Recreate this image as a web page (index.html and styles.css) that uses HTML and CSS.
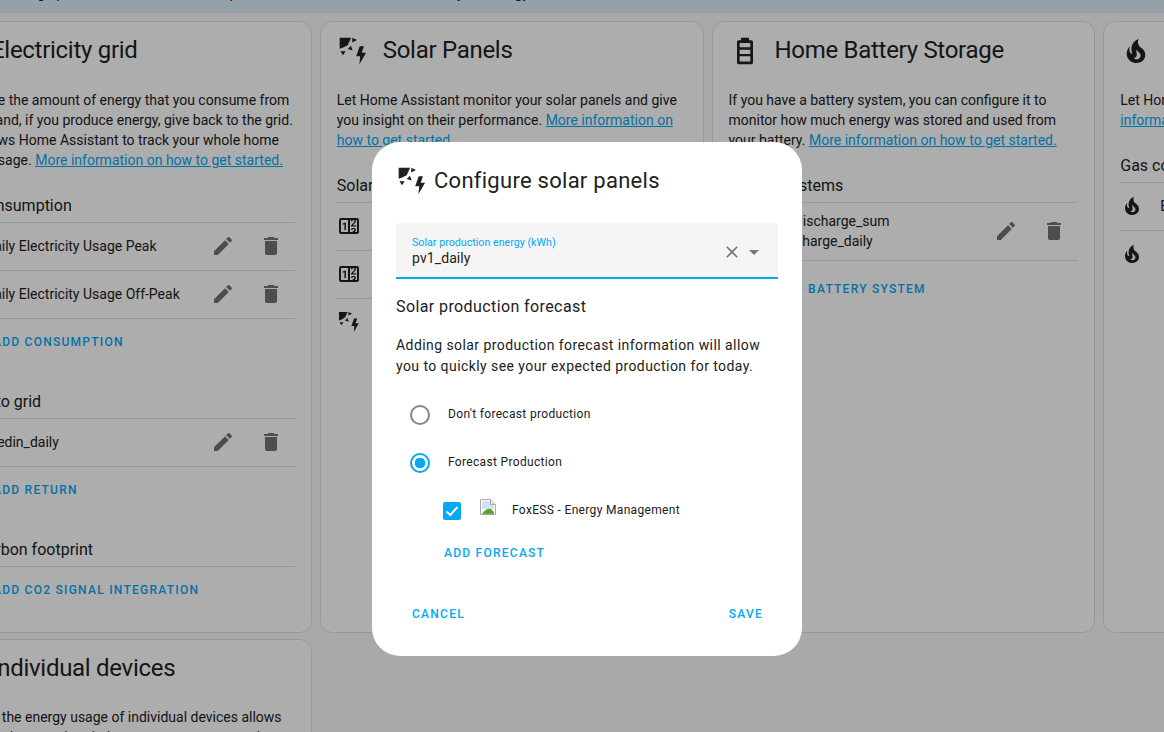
FILE: index.html
```html
<!DOCTYPE html>
<html lang="en">

<head>
    <meta charset="UTF-8">
    <meta name="viewport" content="width=device-width, initial-scale=1.0">
    <title>Energy configuration</title>
    <link rel="stylesheet" href="styles.css">
</head>

<body>
    <svg class="sprite">
        <symbol id="i-solar" viewBox="0 0 24 24">
            <path d="M2 2h8.6L8 7.6 4.6 9.4 2 10.4zM11.45 2v3.55L15 3.77zM10.45 8 8 10.46l3.75 1.25zM2.6 12.2h3.9l-2 3zM17 8.5l-2.6 7.4h3l-.6 6.1 5-8.7h-3.3l1.7-4.8z" />
        </symbol>
        <symbol id="i-counter" viewBox="0 0 24 24">
            <path d="M4,4H20A2,2 0 0,1 22,6V18A2,2 0 0,1 20,20H4A2,2 0 0,1 2,18V6A2,2 0 0,1 4,4M4,6V18H11V6H4M20,18V6H18.76C19,6.54 18.95,7.07 18.95,7.13C18.88,7.8 18.41,8.5 18.24,8.75L15.91,11.3L19.23,11.28L19.24,12.5L14.04,12.47L14,11.47C14,11.47 17.05,8.24 17.2,7.95C17.34,7.67 17.91,6 16.5,6C15.27,6.05 15.41,7.3 15.41,7.3L13.87,7.31C13.87,7.31 13.88,6.65 14.25,6H13V18H15.58L15.57,17.14L16.54,17.13C16.54,17.13 17.45,16.97 17.46,16.08C17.5,15.08 16.65,15.08 16.5,15.08C16.37,15.08 15.43,15.13 15.43,15.97H13.91C13.91,15.97 13.95,13.89 16.5,13.89C19.1,13.89 18.96,15.91 18.96,15.91C18.96,15.91 19,17.16 17.85,17.63L18.37,18H20M8.92,16H7.42V10.2L5.62,10.76V9.53L8.76,8.41H8.92V16Z" />
        </symbol>
        <symbol id="i-battery" viewBox="0 0 24 24">
            <path fill-rule="evenodd" d="M7.33 4H9V2h6v2h1.67C17.4 4 18 4.6 18 5.33v15.34c0 .73-.6 1.33-1.33 1.33H7.33C6.6 22 6 21.4 6 20.67V5.33C6 4.6 6.6 4 7.33 4zM8 6v3.2h8V6zM8 11v3.2h8V11zM8 16v3.8h8V16z" />
        </symbol>
        <symbol id="i-fire" viewBox="0 0 24 24">
            <path d="M17.66 11.2C17.43 10.9 17.15 10.64 16.89 10.38C16.22 9.78 15.46 9.35 14.82 8.72C13.33 7.26 13 4.85 13.95 3C13 3.23 12.17 3.75 11.46 4.32C8.87 6.4 7.85 10.07 9.07 13.22C9.11 13.32 9.15 13.42 9.15 13.55C9.15 13.77 9 13.97 8.8 14.05C8.57 14.15 8.33 14.09 8.14 13.93C8.08 13.88 8.04 13.83 8 13.76C6.87 12.33 6.69 10.28 7.45 8.64C5.78 10 4.87 12.3 5 14.47C5.06 14.97 5.12 15.47 5.29 15.97C5.43 16.57 5.7 17.17 6 17.7C7.08 19.43 8.95 20.67 10.96 20.92C13.1 21.19 15.39 20.8 17.03 19.32C18.86 17.66 19.5 15 18.56 12.72L18.43 12.46C18.28 12.13 17.66 11.2 17.66 11.2M14.5 17.5C14.22 17.74 13.76 18 13.4 18.1C12.28 18.5 11.16 17.94 10.5 17.28C11.69 17 12.4 16.12 12.61 15.23C12.78 14.43 12.46 13.77 12.33 13C12.21 12.26 12.23 11.63 12.5 10.94C12.69 11.32 12.89 11.7 13.13 12C13.9 13 15.11 13.44 15.37 14.8C15.41 14.94 15.43 15.08 15.43 15.23C15.46 16.05 15.1 16.95 14.5 17.5H14.5Z" />
        </symbol>
        <symbol id="i-tower" viewBox="0 0 24 24">
            <path d="M8.28 5.45 6.5 4.55 7.76 2h8.47l1.27 2.55-1.78.89L15 4H9zM18.62 8h-4.53l-.79-3h-2.6l-.79 3H5.38L4.1 10.55l1.79.89.73-1.44h10.76l.73 1.45 1.79-.89zM17.38 22H15l-3-6-3 6H6.62L9 13h6z" />
        </symbol>
        <symbol id="i-devices" viewBox="0 0 24 24">
            <path d="M16 7V3h-2v4h-4V3H8v4c-1 0-2 1-2 2v5.5L9.5 18v3h5v-3l3.5-3.5V9c0-1-1-2-2-2z" />
        </symbol>
        <symbol id="i-pencil" viewBox="0 0 24 24">
            <path d="M20.71,7.04C21.1,6.65 21.1,6 20.71,5.63L18.37,3.29C18,2.9 17.35,2.9 16.96,3.29L15.12,5.12L18.87,8.87M3,17.25V21H6.75L17.81,9.93L14.06,6.18L3,17.25Z" />
        </symbol>
        <symbol id="i-delete" viewBox="0 0 24 24">
            <path d="M19,4H15.5L14.5,3H9.5L8.5,4H5V6H19M6,19A2,2 0 0,0 8,21H16A2,2 0 0,0 18,19V7H6V19Z" />
        </symbol>
        <symbol id="i-close" viewBox="0 0 24 24">
            <path d="M19,6.41L17.59,5L12,10.59L6.41,5L5,6.41L10.59,12L5,17.59L6.41,19L12,13.41L17.59,19L19,17.59L13.41,12L19,6.41Z" />
        </symbol>
        <symbol id="i-down" viewBox="0 0 24 24">
            <path d="M7,10L12,15L17,10H7Z" />
        </symbol>
    </svg>

    <div class="aviso">
        <span>After setting up a new device, it can take up to 2 hours for new data to arrive in your energy dashboard.</span>
    </div>

    <main class="cards">
        <section class="card">
            <div class="card-head">
                <svg class="icon-big"><use href="#i-tower" /></svg>
                <h2>Electricity grid</h2>
            </div>
            <p>Configure the amount of energy that you consume from the grid and, if you produce energy, give back to the grid. This allows Home Assistant to track your whole home energy usage. <a href="#">More information on how to get started.</a></p>

            <h3>Grid consumption</h3>
            <div class="lista">
                <div class="linha">
                    <svg class="icon"><use href="#i-counter" /></svg>
                    <span class="nome">Daily Electricity Usage Peak</span>
                    <button class="acao"><svg class="icon"><use href="#i-pencil" /></svg></button>
                    <button class="acao"><svg class="icon"><use href="#i-delete" /></svg></button>
                </div>
                <div class="linha">
                    <svg class="icon"><use href="#i-counter" /></svg>
                    <span class="nome">Daily Electricity Usage Off-Peak</span>
                    <button class="acao"><svg class="icon"><use href="#i-pencil" /></svg></button>
                    <button class="acao"><svg class="icon"><use href="#i-delete" /></svg></button>
                </div>
            </div>
            <div class="adicionar">
                <svg class="icon"><use href="#i-tower" /></svg>
                <span class="botao">Add consumption</span>
            </div>

            <h3>Return to grid</h3>
            <div class="lista">
                <div class="linha">
                    <svg class="icon"><use href="#i-counter" /></svg>
                    <span class="nome">feedin_daily</span>
                    <button class="acao"><svg class="icon"><use href="#i-pencil" /></svg></button>
                    <button class="acao"><svg class="icon"><use href="#i-delete" /></svg></button>
                </div>
            </div>
            <div class="adicionar">
                <svg class="icon"><use href="#i-tower" /></svg>
                <span class="botao">Add return</span>
            </div>

            <h3>Grid carbon footprint</h3>
            <div class="lista"></div>
            <div class="adicionar">
                <svg class="icon"><use href="#i-tower" /></svg>
                <span class="botao">Add CO2 signal integration</span>
            </div>
        </section>

        <section class="card">
            <div class="card-head">
                <svg class="icon-big"><use href="#i-solar" /></svg>
                <h2>Solar Panels</h2>
            </div>
            <p>Let Home Assistant monitor your solar panels and give you insight on their performance. <a href="#">More information on how to get started.</a></p>

            <h3>Solar production</h3>
            <div class="lista">
                <div class="linha">
                    <svg class="icon"><use href="#i-counter" /></svg>
                    <span class="nome">pv1_daily</span>
                    <button class="acao"><svg class="icon"><use href="#i-pencil" /></svg></button>
                    <button class="acao"><svg class="icon"><use href="#i-delete" /></svg></button>
                </div>
                <div class="linha">
                    <svg class="icon"><use href="#i-counter" /></svg>
                    <span class="nome">pv2_daily</span>
                    <button class="acao"><svg class="icon"><use href="#i-pencil" /></svg></button>
                    <button class="acao"><svg class="icon"><use href="#i-delete" /></svg></button>
                </div>
            </div>
            <div class="adicionar">
                <svg class="icon"><use href="#i-solar" /></svg>
                <span class="botao">Add solar production</span>
            </div>
        </section>

        <section class="card">
            <div class="card-head">
                <svg class="icon-big"><use href="#i-battery" /></svg>
                <h2>Home Battery Storage</h2>
            </div>
            <p>If you have a battery system, you can configure it to monitor how much energy was stored and used from your battery. <a href="#">More information on how to get started.</a></p>

            <h3>Battery systems</h3>
            <div class="lista">
                <div class="linha linha-dupla">
                    <svg class="icon"><use href="#i-battery" /></svg>
                    <span class="nome">bat_discharge_sum<br>bat_charge_daily</span>
                    <button class="acao"><svg class="icon"><use href="#i-pencil" /></svg></button>
                    <button class="acao"><svg class="icon"><use href="#i-delete" /></svg></button>
                </div>
            </div>
            <div class="adicionar adicionar-baixo">
                <svg class="icon"><use href="#i-battery" /></svg>
                <span class="botao">Add battery system</span>
            </div>
        </section>

        <section class="card">
            <div class="card-head">
                <svg class="icon-big"><use href="#i-fire" /></svg>
                <h2>Gas Consumption</h2>
            </div>
            <p>Let Home Assistant monitor your gas usage. <a href="#">More information on how to get started.</a></p>

            <h3>Gas consumption</h3>
            <div class="lista">
                <div class="linha">
                    <svg class="icon"><use href="#i-fire" /></svg>
                    <span class="nome">Energy</span>
                </div>
            </div>
            <div class="adicionar">
                <svg class="icon"><use href="#i-fire" /></svg>
                <span class="botao">Add gas source</span>
            </div>
        </section>

        <section class="card card-baixo">
            <div class="card-head">
                <svg class="icon-big"><use href="#i-devices" /></svg>
                <h2>Individual devices</h2>
            </div>
            <p>Tracking the energy usage of individual devices allows Home Assistant to break down your energy usage by device.</p>
        </section>
    </main>

    <div class="fundo-escuro"></div>

    <div class="dialogo">
        <div class="dialogo-titulo">
            <svg class="icon-big"><use href="#i-solar" /></svg>
            <h2>Configure solar panels</h2>
        </div>

        <div class="campo">
            <div class="campo-texto">
                <label>Solar production energy (kWh)</label>
                <span>pv1_daily</span>
            </div>
            <svg class="icon-limpar"><use href="#i-close" /></svg>
            <svg class="icon icon-cinza"><use href="#i-down" /></svg>
        </div>

        <h3 class="subtitulo">Solar production forecast</h3>
        <p class="explica">Adding solar production forecast information will allow you to quickly see your expected production for today.</p>

        <div class="opcao">
            <span class="radio"></span>
            <span>Don't forecast production</span>
        </div>
        <div class="opcao">
            <span class="radio marcado"></span>
            <span>Forecast Production</span>
        </div>
        <div class="opcao opcao-previsao">
            <span class="check">
                <svg viewBox="0 0 18 18"><path d="M3.5 9.5 7.2 13l7.3-8" /></svg>
            </span>
            <svg class="img-quebrada" viewBox="0 0 16 16">
                <path d="M.5.5h10l5 5v10H.5z" fill="#fff" stroke="#a9a9a9" />
                <path d="M10.5.5v5h5" fill="#e4e4e4" stroke="#a9a9a9" />
                <path d="M2 2h8v4h4v4H2z" fill="#d5e0f4" />
                <path d="M2 15c2-4 6-6 9-5 2 1 3 3 3 5z" fill="#55a839" />
            </svg>
            <span>FoxESS - Energy Management</span>
        </div>
        <div class="add-previsao botao">Add forecast</div>

        <div class="dialogo-acoes">
            <span class="botao">Cancel</span>
            <span class="botao">Save</span>
        </div>
    </div>
</body>

</html>
```

FILE: styles.css
```css
body {
    margin: 0;
    height: 732px;
    overflow: hidden;
    font-family: Roboto, 'Noto Sans', sans-serif;
    font-size: 14px;
    line-height: 20px;
    color: #212121;
    background-color: #fafafa;
}

.sprite {
    display: none;
}

.aviso {
    height: 13px;
    display: flex;
    align-items: flex-end;
    background-color: #daedf7;
}

.aviso span {
    flex: none;
    margin: 0 0 10px -32px;
}

.cards {
    display: grid;
    grid-template-columns: repeat(4, 383.75px);
    gap: 6px 8px;
    margin: 8px 0 0 -72px;
    width: 1560px;
}

.card {
    box-sizing: border-box;
    border: 1px solid #e0e0e0;
    border-radius: 12px;
    background-color: #fff;
    padding: 0 16px 18px;
}

.card-head {
    display: flex;
    align-items: center;
    height: 58px;
    margin-bottom: 10px;
}

.card-baixo .card-head {
    margin-bottom: 9px;
}

.card-head h2 {
    margin: 0 0 2px 14px;
    font-size: 24px;
    font-weight: 400;
    line-height: 32px;
    letter-spacing: -0.012em;
}

.icon-big {
    flex: none;
    width: 32px;
    height: 32px;
    fill: #212121;
}

.icon {
    flex: none;
    width: 24px;
    height: 24px;
    fill: #212121;
}

p {
    margin: 0;
}

a {
    color: #03a9f4;
}

h3 {
    margin: 24px 0 4px;
    font-size: 16px;
    font-weight: 400;
    line-height: 24px;
}

.lista {
    border-top: 1px solid #e0e0e0;
}

.linha {
    box-sizing: border-box;
    display: flex;
    align-items: center;
    height: 48px;
    padding-bottom: 1px;
    border-bottom: 1px solid #e0e0e0;
}

.linha-dupla {
    height: 58px;
}

.nome {
    flex: 1;
    margin-left: 16px;
}

.acao {
    width: 48px;
    height: 48px;
    padding: 12px;
    border: none;
    background: none;
}

.acao .icon {
    fill: #727272;
}

.adicionar {
    display: flex;
    align-items: center;
    height: 46px;
    padding-bottom: 1px;
}

.adicionar-baixo {
    padding-top: 5px;
}

.botao {
    font-size: 12px;
    font-weight: 500;
    letter-spacing: 1.25px;
    text-transform: uppercase;
    color: #03a9f4;
}

.adicionar .botao {
    margin-left: 24px;
}

.fundo-escuro {
    position: fixed;
    inset: 0;
    background-color: rgba(0, 0, 0, 0.32);
}

.dialogo {
    position: fixed;
    left: 372px;
    top: 142px;
    width: 430px;
    height: 514px;
    box-sizing: border-box;
    padding: 24px;
    background-color: #fff;
    border-radius: 28px;
}

.dialogo-titulo {
    display: flex;
    align-items: center;
    height: 30px;
    margin-bottom: 27px;
}

.dialogo-titulo h2 {
    margin: 0 0 0 6px;
    font-size: 22px;
    font-weight: 400;
    letter-spacing: 0.27px;
}

.campo {
    box-sizing: border-box;
    display: flex;
    align-items: center;
    height: 56px;
    padding: 3px 12px 0 16px;
    background-color: #f5f5f5;
    border-bottom: 2px solid #03a9f4;
    border-radius: 4px 4px 0 0;
}

.campo-texto {
    flex: 1;
    display: flex;
    flex-direction: column;
}

.campo label {
    font-size: 10.7px;
    line-height: 14px;
    color: #03a9f4;
}

.campo span {
    margin-top: -2px;
    font-size: 14px;
    line-height: 20px;
    letter-spacing: 0.1px;
}

.icon-limpar {
    flex: none;
    width: 20px;
    height: 20px;
    fill: #757575;
}

.icon-cinza {
    fill: #757575;
}

.subtitulo {
    margin: 16px 0;
    letter-spacing: 0.4px;
}

.explica {
    margin-bottom: 13px;
    line-height: 21px;
    letter-spacing: 0.43px;
}

.opcao {
    display: flex;
    align-items: center;
    height: 48px;
    padding-left: 14px;
    font-size: 12px;
    letter-spacing: 0.33px;
}

.radio {
    box-sizing: border-box;
    width: 20px;
    height: 20px;
    margin: 1px 18px 0 0;
    border: 2px solid #858585;
    border-radius: 50%;
}

.radio.marcado {
    border-color: #03a9f4;
    background: radial-gradient(circle, #03a9f4 5px, transparent 5.5px);
}

.opcao-previsao {
    padding-left: 47px;
}

.check {
    width: 18px;
    height: 18px;
    margin-top: 2px;
    margin-right: 19px;
    background-color: #03a9f4;
    border-radius: 2px;
}

.check svg {
    display: block;
    fill: none;
    stroke: #fff;
    stroke-width: 2;
}

.img-quebrada {
    width: 16px;
    height: 16px;
    margin: -6px 16px 0 0;
}

.add-previsao {
    margin: 1px 0 0 48px;
    line-height: 36px;
}

.dialogo-acoes {
    display: flex;
    justify-content: space-between;
    margin-top: 25px;
    padding: 0 15px 0 16px;
    line-height: 36px;
}
```
